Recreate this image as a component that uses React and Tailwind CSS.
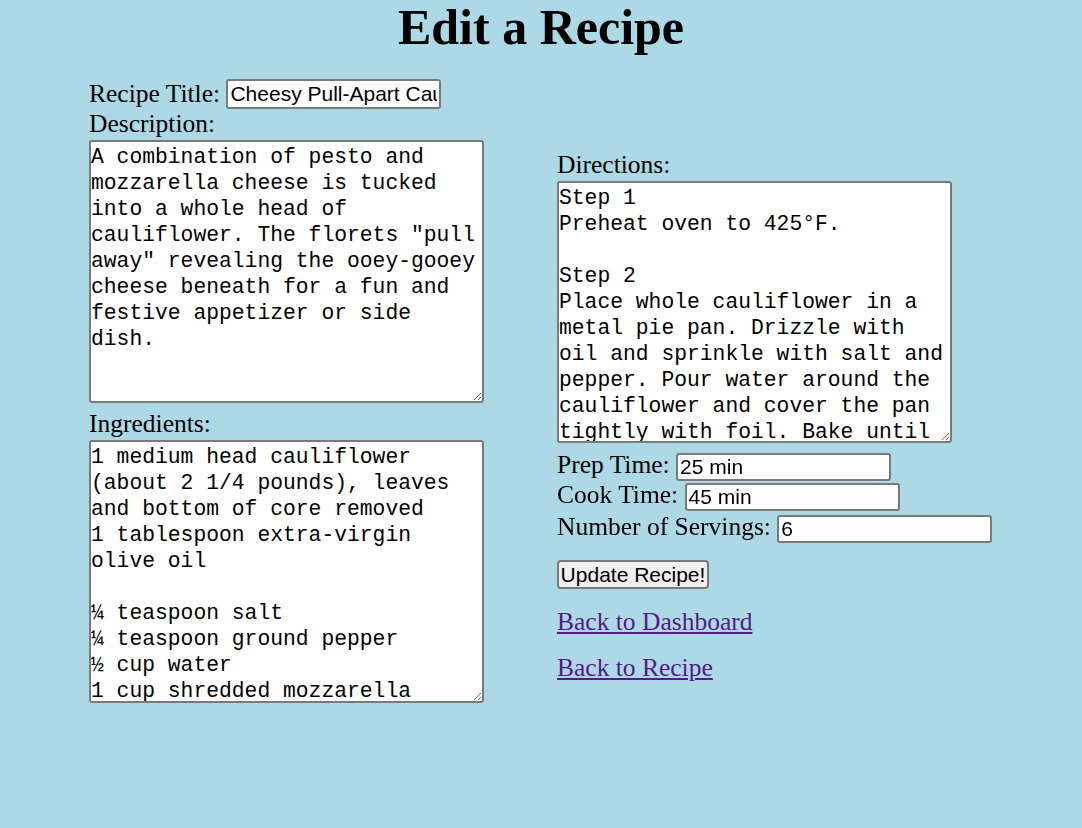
import { useState } from "react";

const description =
  'A combination of pesto and mozzarella cheese is tucked into a whole head of cauliflower. The florets "pull away" revealing the ooey-gooey cheese beneath for a fun and festive appetizer or side dish.';

const ingredients = `1 medium head cauliflower (about 2 1/4 pounds), leaves and bottom of core removed
1 tablespoon extra-virgin olive oil

¼ teaspoon salt
¼ teaspoon ground pepper
½ cup water
1 cup shredded mozzarella cheese
3 tablespoons prepared pesto
1 tablespoon grated Parmesan cheese`;

const directions = `Step 1
Preheat oven to 425°F.

Step 2
Place whole cauliflower in a metal pie pan. Drizzle with oil and sprinkle with salt and pepper. Pour water around the cauliflower and cover the pan tightly with foil. Bake until the cauliflower is tender, about 30 minutes.

Step 3
Uncover and let cool for 10 minutes.`;

const inputCls =
  "h-[28px] w-[215px] rounded-[3px] border-2 border-[#7a7a7a] bg-white px-[2px] font-['Liberation_Sans',Arial,sans-serif] text-[21px] text-black outline-none";

const areaCls =
  "block w-[395px] rounded-[3px] border-2 border-[#7a7a7a] bg-white px-0 py-[2px] font-['Liberation_Mono','Courier_New',monospace] text-[21.33px] leading-[26px] text-black outline-none [scrollbar-width:none]";

const EditRecipe = () => {
  const [title, setTitle] = useState("Cheesy Pull-Apart Cauliflower");
  const [desc, setDesc] = useState(description);
  const [ingr, setIngr] = useState(ingredients);
  const [dirs, setDirs] = useState(directions);
  const [prep, setPrep] = useState("25 min");
  const [cook, setCook] = useState("45 min");
  const [servings, setServings] = useState("6");

  return (
    <div className="min-h-screen bg-[#add8e6] font-['Liberation_Serif','Times_New_Roman',serif] text-black">
      <h1 className="text-center text-[50px] font-bold leading-[54px]">Edit a Recipe</h1>

      <form
        className="mt-[25px] flex justify-center gap-[73px]"
        onSubmit={(e) => e.preventDefault()}
      >
        <div className="flex w-[395px] flex-col">
          <div className="flex h-[30px] items-center">
            <label className="text-[25.5px] leading-[30px]">Recipe Title:&nbsp;</label>
            <input
              className={inputCls + " h-[30px]"}
              value={title}
              onChange={(e) => setTitle(e.target.value)}
            />
          </div>
          <label className="text-[25.5px] leading-[30px]">Description:</label>
          <textarea
            className={areaCls + " mt-[1px] h-[263px]"}
            value={desc}
            onChange={(e) => setDesc(e.target.value)}
          />
          <label className="mt-[6px] text-[25.5px] leading-[30px]">Ingredients:</label>
          <textarea
            className={areaCls + " mt-[1px] h-[263px]"}
            value={ingr}
            onChange={(e) => setIngr(e.target.value)}
          />
        </div>

        <div className="mt-[71px] flex w-[436px] flex-col items-start">
          <label className="text-[25.5px] leading-[30px]">Directions:</label>
          <textarea
            className={areaCls + " mt-[1px] h-[262px]"}
            value={dirs}
            onChange={(e) => setDirs(e.target.value)}
          />

          <div className="mt-[10px] flex items-start">
            <label className="text-[25.5px] leading-[24px]">Prep Time:&nbsp;</label>
            <input className={inputCls} value={prep} onChange={(e) => setPrep(e.target.value)} />
          </div>
          <div className="mt-[2px] flex items-start">
            <label className="text-[25.5px] leading-[24px]">Cook Time:&nbsp;</label>
            <input className={inputCls} value={cook} onChange={(e) => setCook(e.target.value)} />
          </div>
          <div className="mt-[4px] flex items-start">
            <label className="text-[25.5px] leading-[24px]">Number of Servings:&nbsp;</label>
            <input
              className={inputCls}
              value={servings}
              onChange={(e) => setServings(e.target.value)}
            />
          </div>

          <button
            type="submit"
            className="mt-[17px] h-[29px] w-[152px] rounded-[4px] border-2 border-[#7a7a7a] bg-[#efefef] font-['Liberation_Sans',Arial,sans-serif] text-[21px] leading-none text-black"
          >
            Update Recipe!
          </button>

          <a href="#" className="mt-[18px] text-[25.5px] leading-[30px] text-[#551a8b] underline">
            Back to Dashboard
          </a>
          <a href="#" className="mt-[16px] text-[25.5px] leading-[30px] text-[#551a8b] underline">
            Back to Recipe
          </a>
        </div>
      </form>
    </div>
  );
};

export default EditRecipe;
